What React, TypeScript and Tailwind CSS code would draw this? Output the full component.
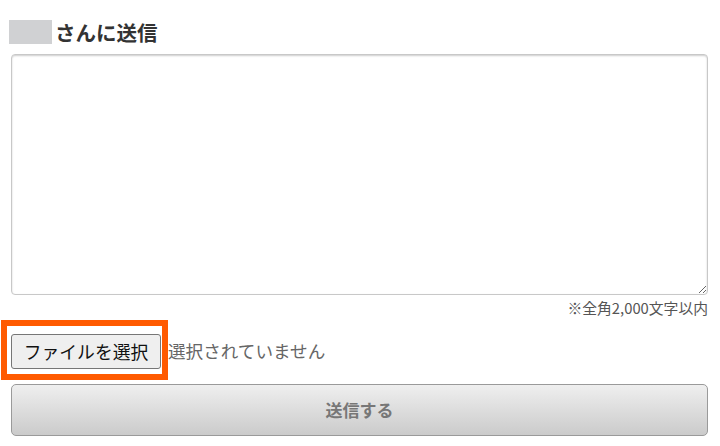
export default function App() {
  return (
    <div className="w-[720px] h-[446px] overflow-hidden bg-white pl-[9px] pr-[12px] pt-[20px] font-['Noto_Sans_CJK_JP',sans-serif]">
      {/* Heading */}
      <div className="flex items-center h-[24px]">
        <span className="block w-[43px] h-[24px] bg-[#d0d1d3]" />
        <h2 className="ml-[3px] text-[20.5px] font-bold leading-[24px] text-[#333]">さんに送信</h2>
      </div>

      {/* Message */}
      <textarea className="mt-[10px] ml-[2px] block w-[697px] h-[241px] rounded-[4px] border border-[#c8c8c8] bg-white shadow-[inset_0_1px_2px_rgba(0,0,0,0.2)] outline-none" />
      <p className="mt-[3px] text-right text-[14.8px] leading-[20px] text-[#555]">※全角2,000文字以内</p>

      {/* File input */}
      <div className="relative mt-[16px] ml-[2px] flex items-center h-[35px]">
        <button className="h-[35px] w-[150px] shrink-0 rounded-[3px] border border-[#767676] bg-[#efefef] text-[17.8px] text-[#111]">
          ファイルを選択
        </button>
        <span className="ml-[7px] text-[17.6px] text-[#666]">選択されていません</span>
        <div className="absolute left-[-10px] top-[-14px] w-[167px] h-[60px] border-[6px] border-[#ff5a00]" />
      </div>

      {/* Submit */}
      <button className="mt-[15px] ml-[2px] block w-[697px] h-[52px] rounded-[5px] border border-[#9a9a9a] bg-gradient-to-b from-[#efefef] to-[#cbcbcb] text-[17px] font-bold text-[#777]">
        送信する
      </button>
    </div>
  );
}
